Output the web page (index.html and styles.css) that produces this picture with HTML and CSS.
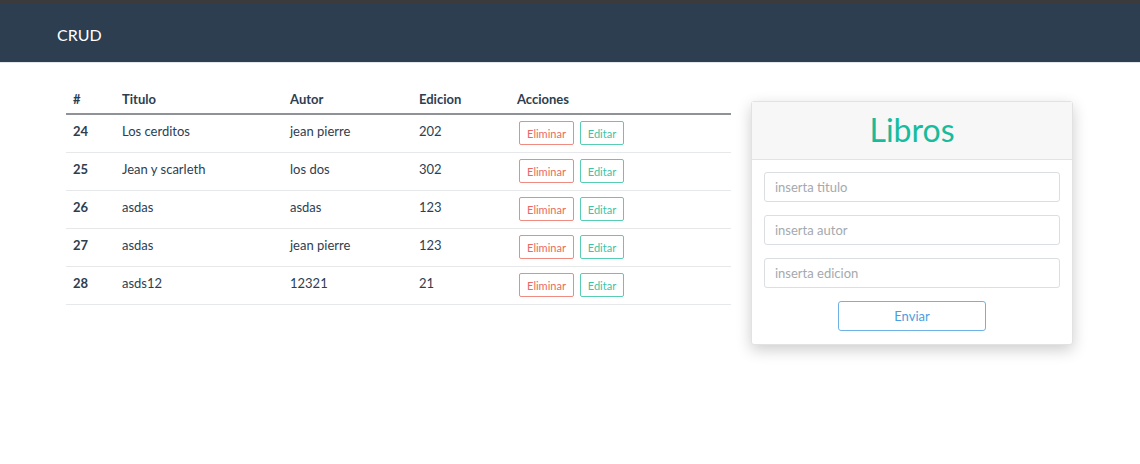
FILE: index.html
```html
<!DOCTYPE html>
<html lang="es">
<head>
<meta charset="utf-8">
<title>CRUD</title>
<link rel="stylesheet" href="styles.css">
</head>
<body>
<nav class="navbar"><span class="brand">CRUD</span></nav>
<main class="main">
  <section class="table-wrap">
    <table class="table">
      <thead>
        <tr><th class="c-id">#</th><th class="c-t">Titulo</th><th class="c-a">Autor</th><th class="c-e">Edicion</th><th>Acciones</th></tr>
      </thead>
      <tbody>
        <tr><td class="id">24</td><td>Los cerditos</td><td>jean pierre</td><td>202</td><td><span class="btn del">Eliminar</span><span class="btn edit">Editar</span></td></tr>
        <tr><td class="id">25</td><td>Jean y scarleth</td><td>los dos</td><td>302</td><td><span class="btn del">Eliminar</span><span class="btn edit">Editar</span></td></tr>
        <tr><td class="id">26</td><td>asdas</td><td>asdas</td><td>123</td><td><span class="btn del">Eliminar</span><span class="btn edit">Editar</span></td></tr>
        <tr><td class="id">27</td><td>asdas</td><td>jean pierre</td><td>123</td><td><span class="btn del">Eliminar</span><span class="btn edit">Editar</span></td></tr>
        <tr><td class="id">28</td><td>asds12</td><td>12321</td><td>21</td><td><span class="btn del">Eliminar</span><span class="btn edit">Editar</span></td></tr>
      </tbody>
    </table>
  </section>
  <aside class="card">
    <div class="card-header">Libros</div>
    <div class="card-body">
      <input class="input" type="text" placeholder="inserta titulo">
      <input class="input" type="text" placeholder="inserta autor">
      <input class="input" type="text" placeholder="inserta edicion">
      <div class="actions"><span class="send">Enviar</span></div>
    </div>
  </aside>
</main>
</body>
</html>
```
FILE: styles.css
```css
* { box-sizing: border-box; }
html, body { min-height: 100%; }
body {
  margin: 0;
  min-height: 464px;
  font-family: Lato, "Liberation Sans", sans-serif;
  font-size: 13px;
  color: #2c3e50;
  background: #fff;
}
.navbar {
  height: 63px;
  background: #2c3e50;
  border-top: 3px solid #3b3b3b;
  border-bottom: 1px solid #e3e6ea;
  display: flex;
  align-items: center;
  padding-left: 57px;
}
.brand {
  color: #fff;
  font-size: 16px;
  padding-top: 3px;
}
.main {
  display: flex;
  align-items: flex-start;
  padding: 21px 0 40px 66px;
  gap: 20px;
}
.table-wrap { width: 665px; }
.table {
  width: 665px;
  border-collapse: collapse;
  color: #2c3e50;
}
.table th {
  text-align: left;
  font-weight: 700;
  height: 30px;
  padding: 0 7px;
  border-bottom: 2px solid #8f9397;
  vertical-align: middle;
}
.c-id { width: 49px; }
.c-t { width: 168px; }
.c-a { width: 129px; }
.c-e { width: 98px; }
.table td {
  height: 38px;
  padding: 0 7px;
  border-bottom: 1px solid #e6e8ea;
  vertical-align: middle;
  padding-bottom: 4px;
}
.table td.id { font-weight: 700; }
.table td:last-child { padding-left: 9px; padding-bottom: 0; padding-top: 0; }
.btn {
  display: inline-flex;
  align-items: center;
  justify-content: center;
  height: 24px;
  font-size: 11px;
  border: 1px solid;
  border-radius: 2px;
  padding: 0 6px;
  vertical-align: middle;
}
.btn.del { color: #ea6a5e; border-color: #ef8b80; width: 55px; margin-right: 6px; }
.btn.edit { color: #3cc4a7; border-color: #58cdb3; width: 44px; }
.card {
  width: 322px;
  margin-top: 17px;
  border: 1px solid #e2e2e2;
  border-radius: 3px;
  background: #fff;
  box-shadow: 0 5px 15px rgba(0,0,0,0.2);
}
.card-header {
  background: #f7f7f7;
  border-bottom: 1px solid #e3e3e3;
  height: 58px;
  display: flex;
  align-items: center;
  justify-content: center;
  color: #18bc9c;
  font-size: 32px;
  padding-bottom: 3px;
}
.card-body {
  padding: 12px 12px 13px 12px;
  display: flex;
  flex-direction: column;
  gap: 13px;
}
.input {
  width: 296px;
  height: 30px;
  border: 1px solid #dbdee2;
  border-radius: 3px;
  padding: 0 10px;
  font-family: Lato, "Liberation Sans", sans-serif;
  font-size: 13px;
  color: #2c3e50;
  outline: none;
}
.input::placeholder { color: #a4a9ae; }
.actions { display: flex; justify-content: center; }
.send {
  width: 148px;
  height: 30px;
  border: 1px solid #6fb3e6;
  border-radius: 3px;
  display: flex;
  align-items: center;
  justify-content: center;
  color: #4a9ee0;
  font-size: 13px;
}
```
